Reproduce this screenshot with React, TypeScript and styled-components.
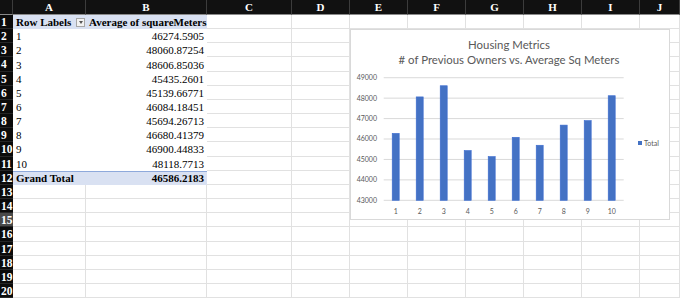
import { FC } from 'react'
import styled, { createGlobalStyle } from 'styled-components'

const GlobalStyle = createGlobalStyle`
  html, body {
    margin: 0;
    padding: 0;
    background: #fff;
    overflow: hidden;
  }
`

const COLS = ['A', 'B', 'C', 'D', 'E', 'F', 'G', 'H', 'I', 'J']
const VALUES = [
  '46274.5905', '48060.87254', '48606.85036', '45435.2601', '45139.66771',
  '46084.18451', '45694.26713', '46680.41379', '46900.44833', '48118.7713',
]
const ROW_COUNT = 20

const Page = styled.div`
  position: relative;
  width: 680px;
  height: 299px;
  overflow: hidden;
  font-family: "Liberation Serif", "Times New Roman", serif;
`

const Sheet = styled.div`
  display: grid;
  grid-template-columns: 13px 73px 121px 85px repeat(6, 58px) 1fr;
  grid-template-rows: 15px repeat(${ROW_COUNT}, 14.17px);
`

const Corner = styled.div`
  background: #111;
  border-right: 1px solid #3c3c3c;
  border-bottom: 1px solid #8a8a8a;
`

const ColHead = styled.div`
  background: #111;
  color: #fff;
  font-weight: bold;
  font-size: 11px;
  line-height: 14px;
  text-align: center;
  border-right: 1px solid #3c3c3c;
  border-bottom: 1px solid #8a8a8a;
  box-sizing: border-box;
`

const RowHead = styled.div<{ $active?: boolean }>`
  background: ${p => (p.$active ? '#4a4a4a' : '#0b0b0b')};
  color: #fff;
  font-weight: bold;
  font-size: 11.5px;
  line-height: 14px;
  padding-left: 1px;
  white-space: nowrap;
  overflow: hidden;
  border-bottom: 1px solid #262626;
  box-sizing: border-box;
`

const Cell = styled.div<{ $grid?: boolean; $align?: 'left' | 'right'; $fill?: boolean; $total?: boolean; $bold?: boolean }>`
  box-sizing: border-box;
  font-size: 11px;
  line-height: 14px;
  color: #000;
  white-space: nowrap;
  overflow: hidden;
  text-align: ${p => p.$align ?? 'left'};
  padding: 0 ${p => (p.$align === 'right' ? '3px' : '0')} 0 ${p => (p.$align === 'right' ? '0' : '3px')};
  font-weight: ${p => (p.$bold ? 'bold' : 'normal')};
  background: ${p => (p.$fill ? '#d9e1f2' : '#fff')};
  border-right: ${p => (p.$grid ? '1px solid #e1e1e1' : 'none')};
  border-bottom: ${p => (p.$grid ? '1px solid #e1e1e1' : 'none')};
  border-top: ${p => (p.$total ? '1px solid #8ea9db' : 'none')};
  display: flex;
  align-items: center;
  justify-content: ${p => (p.$align === 'right' ? 'flex-end' : 'space-between')};
`

const FilterButton = styled.span`
  width: 7px;
  height: 7px;
  margin-right: 1px;
  border: 1px solid #a6a6a6;
  background: #f2f2f2;
  display: flex;
  align-items: center;
  justify-content: center;
  &::after {
    content: '';
    border-left: 2.5px solid transparent;
    border-right: 2.5px solid transparent;
    border-top: 3px solid #555;
  }
`

const ChartFrame = styled.div`
  position: absolute;
  left: 350px;
  top: 29px;
  width: 320px;
  height: 191px;
  box-sizing: border-box;
  background: #fff;
  border: 1px solid #d9d9d9;
  display: flex;
  flex-direction: column;
  font-family: Lato, "Open Sans", sans-serif;
  color: #595959;
`

const ChartTitle = styled.div`
  padding-top: 7px;
  text-align: center;
  font-size: 11.4px;
  line-height: 15px;
  padding-right: 2px;
`

const PlotRow = styled.div`
  flex: 1;
  display: flex;
  align-items: center;
`

const Legend = styled.div`
  display: flex;
  align-items: center;
  gap: 2px;
  margin-left: 6px;
  font-size: 7px;
  color: #595959;
`

const LegendKey = styled.span`
  width: 4px;
  height: 4px;
  background: #4472c4;
`

const Y0 = 132.3
const PX_PER_UNIT = 0.02043

const Plot: FC = () => {
  const ticks = [49000, 48000, 47000, 46000, 45000, 44000, 43000]
  const yOf = (v: number) => Y0 - (v - 43000) * PX_PER_UNIT
  return (
    <svg width="281" height="151" viewBox="0 0 281 151">
      {ticks.map(t => (
        <g key={t}>
          <line x1="32.7" x2="272.7" y1={yOf(t)} y2={yOf(t)} stroke="#d9d9d9" strokeWidth="1" />
          <text x="26" y={yOf(t)} dy="2.4" textAnchor="end" fontSize="7" fill="#595959">{t}</text>
        </g>
      ))}
      {VALUES.map((v, i) => {
        const cx = 44.7 + 24 * i
        const top = yOf(parseFloat(v))
        return (
          <g key={i}>
            <rect x={cx - 3.5} y={top} width="7" height={Y0 - top} fill="#4472c4" stroke="#3a6bd0" strokeWidth="0.6" />
            <text x={cx} y="146" textAnchor="middle" fontSize="7" fill="#595959">{i + 1}</text>
          </g>
        )
      })}
    </svg>
  )
}

const App: FC = () => {
  const cells = []
  cells.push(<Corner key="corner" />)
  COLS.forEach(c => cells.push(<ColHead key={`h${c}`}>{c}</ColHead>))

  for (let r = 1; r <= ROW_COUNT; r++) {
    cells.push(<RowHead key={`r${r}`} $active={r === 15}>{r}</RowHead>)
    COLS.forEach((c, ci) => {
      const key = `${c}${r}`
      const inPivot = ci < 2 && r <= 12
      if (!inPivot) {
        cells.push(<Cell key={key} $grid />)
        return
      }
      if (r === 1) {
        cells.push(
          ci === 0 ? (
            <Cell key={key} $fill $bold>Row Labels<FilterButton /></Cell>
          ) : (
            <Cell key={key} $fill $bold>Average of squareMeters</Cell>
          ),
        )
      } else if (r === 12) {
        cells.push(
          ci === 0 ? (
            <Cell key={key} $fill $total $bold>Grand Total</Cell>
          ) : (
            <Cell key={key} $fill $total $bold $align="right">46586.2183</Cell>
          ),
        )
      } else {
        cells.push(
          ci === 0 ? (
            <Cell key={key}>{r - 1}</Cell>
          ) : (
            <Cell key={key} $align="right">{VALUES[r - 2]}</Cell>
          ),
        )
      }
    })
  }

  return (
    <>
      <GlobalStyle />
      <Page>
        <Sheet>{cells}</Sheet>
        <ChartFrame>
          <ChartTitle>
            Housing Metrics
            <br />
            # of Previous Owners vs. Average Sq Meters
          </ChartTitle>
          <PlotRow>
            <Plot />
            <Legend>
              <LegendKey />
              Total
            </Legend>
          </PlotRow>
        </ChartFrame>
      </Page>
    </>
  )
}

export default App
